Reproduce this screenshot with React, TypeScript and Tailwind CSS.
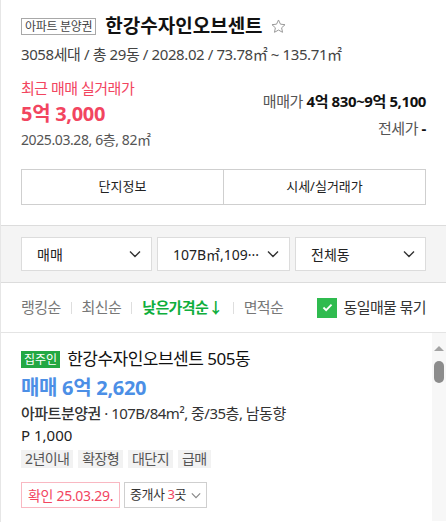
import React from "react";

const Chevron: React.FC<{ className?: string }> = ({ className }) => (
  <svg viewBox="0 0 12 8" className={className} fill="none">
    <polyline points="1,1.5 6,6.5 11,1.5" stroke="currentColor" strokeWidth="1.4" />
  </svg>
);

const Select: React.FC<{ label: string }> = ({ label }) => (
  <div className="flex-1 h-[34px] bg-white border border-[#dcdcdc] flex items-center justify-between pl-[15px] pr-[10px]">
    <span className="text-[14px] text-[#222] truncate">{label}</span>
    <Chevron className="w-[12px] h-[8px] text-[#333] shrink-0 ml-2" />
  </div>
);

const Sep = () => <span className="w-px h-[12px] bg-[#dedede] mx-[10px]" />;

export default function App() {
  return (
    <div className="w-[446px] h-[522px] overflow-hidden bg-white border-l border-[#e6e6e6] font-['Noto_Sans','Noto_Sans_CJK_KR',sans-serif] text-[#222]">
      {/* 단지 요약 */}
      <div className="px-[20px] pt-[16px] pb-[20px]">
        <div className="flex items-center h-[20px]">
          <span className="border border-[#a8a8a8] text-[12px] leading-[15px] text-[#444] px-[3px] tracking-[-0.3px]">
            아파트 분양권
          </span>
          <h1 className="ml-[9px] text-[19px] font-bold leading-[20px] text-[#111]">
            한강수자인오브센트
          </h1>
          <svg viewBox="0 0 24 24" className="ml-[7px] w-[17px] h-[17px]" fill="none">
            <path
              d="M12 2.8l2.75 5.9 6.45.75-4.8 4.4 1.3 6.35L12 17l-5.7 3.2 1.3-6.35-4.8-4.4 6.45-.75z"
              stroke="#999"
              strokeWidth="1.4"
              strokeLinejoin="round"
            />
          </svg>
        </div>
        <p className="mt-[9px] text-[15px] leading-[19px] text-[#444] tracking-[-0.4px]">
          3058세대 / 총 29동 / 2028.02 / 73.78㎡ ~ 135.71㎡
        </p>
        <div className="mt-[15px] flex justify-between">
          <div>
            <p className="text-[15px] leading-[18px] text-[#f2455f] tracking-[-0.5px]">최근 매매 실거래가</p>
            <p className="mt-[6px] text-[20px] leading-[22px] font-bold text-[#f2455f] tracking-[-0.3px]">5억 3,000</p>
            <p className="mt-[6px] text-[14px] leading-[18px] text-[#555] tracking-[-0.4px]">2025.03.28, 6층, 82㎡</p>
          </div>
          <div className="flex flex-col items-end pt-[13px]">
            <p className="text-[15px] leading-[18px] text-[#555] tracking-[-0.4px]">
              매매가 <b className="font-bold text-[#111]">4억 830~9억 5,100</b>
            </p>
            <p className="mt-[9px] text-[15px] leading-[18px] text-[#555] tracking-[-0.4px]">
              전세가 <b className="font-bold text-[#111]">-</b>
            </p>
          </div>
        </div>
        <div className="mt-[20px] flex h-[36px] border border-[#cfcfcf]">
          <button className="flex-1 text-[13px] text-[#222] border-r border-[#cfcfcf]">단지정보</button>
          <button className="flex-1 text-[13px] text-[#222]">시세/실거래가</button>
        </div>
      </div>

      {/* 필터 */}
      <div className="bg-[#f4f4f4] border-y border-[#dcdcdc] px-[20px] pt-[11px] pb-[11px] flex gap-[5px]">
        <Select label="매매" />
        <Select label="107B㎡,109···" />
        <Select label="전체동" />
      </div>

      {/* 정렬 */}
      <div className="h-[50px] border-b border-[#e4e4e4] px-[20px] flex items-center text-[15px] tracking-[-0.6px]">
        <span className="text-[#777]">랭킹순</span>
        <Sep />
        <span className="text-[#777]">최신순</span>
        <Sep />
        <span className="text-[#0fae3c] font-bold">낮은가격순↓</span>
        <Sep />
        <span className="text-[#777]">면적순</span>
        <label className="ml-auto flex items-center">
          <span className="w-[20px] h-[20px] bg-[#2fbb4f] flex items-center justify-center">
            <svg viewBox="0 0 12 10" className="w-[11px] h-[9px]" fill="none">
              <polyline points="1.5,5 4.5,8 10.5,1.8" stroke="#fff" strokeWidth="2" />
            </svg>
          </span>
          <span className="ml-[6px] text-[#333]">동일매물 묶기</span>
        </label>
      </div>

      {/* 매물 목록 */}
      <div className="flex h-[188px]">
        <div className="flex-1 pl-[20px] pt-[16px]">
          <div className="flex items-center">
            <span className="bg-[#23a843] text-white text-[12px] leading-[17px] px-[3px]">집주인</span>
            <span className="ml-[7px] text-[17px] leading-[20px] text-[#111] tracking-[-0.5px]">한강수자인오브센트 505동</span>
          </div>
          <p className="mt-[8px] text-[20px] leading-[22px] font-bold text-[#4c8fe6] tracking-[-0.3px]">매매 6억 2,620</p>
          <p className="mt-[4px] text-[15px] leading-[20px] text-[#333] tracking-[-0.5px]">
            <span className="font-medium">아파트분양권</span> · 107B/84m², 중/35층, 남동향
          </p>
          <p className="mt-[2px] text-[15px] leading-[20px] text-[#222]">P 1,000</p>
          <div className="mt-[5px] flex gap-[5px]">
            {["2년이내", "확장형", "대단지", "급매"].map((t) => (
              <span key={t} className="bg-[#f2f2f2] text-[#555] text-[14px] leading-[18px] px-[4px] tracking-[-0.6px]">
                {t}
              </span>
            ))}
          </div>
          <div className="mt-[14px] flex gap-[4px]">
            <span className="h-[26px] border border-[#f9b8c2] text-[#f2455f] text-[14px] flex items-center px-[6px] tracking-[-0.3px]">
              확인 25.03.29.
            </span>
            <span className="h-[26px] border border-[#cfcfcf] text-[#333] text-[13px] flex items-center pl-[5px] pr-[5px] tracking-[-0.5px]">
              중개사 <span className="text-[#f2455f] ml-[3px]">3</span>곳
              <Chevron className="w-[10px] h-[7px] ml-[5px] text-[#888]" />
            </span>
          </div>
        </div>
        {/* 스크롤바 */}
        <div className="w-[14px] bg-[#f7f7f7] flex flex-col items-center pt-[13px]">
          <span className="w-0 h-0 border-l-[5px] border-r-[5px] border-b-[5px] border-l-transparent border-r-transparent border-b-[#a3a3a3]" />
          <span className="mt-[10px] w-[10px] h-[22px] rounded-full bg-[#8c8c8c]" />
        </div>
      </div>
    </div>
  );
}
